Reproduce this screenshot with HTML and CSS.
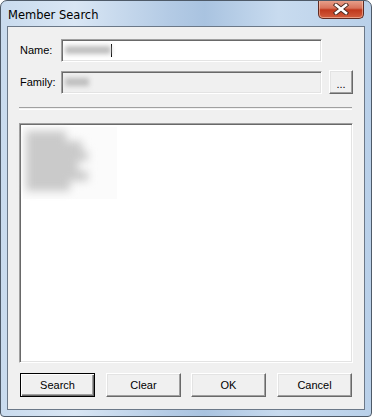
FILE: index.html
```html
<!DOCTYPE html>
<html lang="en">

<head>
  <meta charset="UTF-8">
  <title>Member Search</title>
  <link rel="stylesheet" href="styles.css">
</head>

<body>
  <div class="window">
    <!-- Title bar -->
    <div class="titlebar">
      <span class="title">Member Search</span>
      <button class="close" type="button" aria-label="Close">
        <svg width="18" height="12" viewBox="0 0 18 12">
          <path d="M4 2 L14 10 M14 2 L4 10" stroke="#4b2a22" stroke-width="4.4" stroke-linecap="square" fill="none"/>
          <path d="M4 2 L14 10 M14 2 L4 10" stroke="#fff" stroke-width="2.6" stroke-linecap="square" fill="none"/>
        </svg>
      </button>
    </div>

    <!-- Client area -->
    <div class="client">
      <div class="field-row">
        <label class="field-label" for="name">Name:</label>
        <div class="textbox" id="name"><span class="blur-text blur-name"></span><span class="caret"></span></div>
      </div>

      <div class="field-row">
        <label class="field-label" for="family">Family:</label>
        <div class="textbox disabled" id="family"><span class="blur-text blur-family"></span></div>
        <button class="btn btn-small" type="button">...</button>
      </div>

      <div class="separator"></div>

      <div class="listbox">
        <div class="list-blur">
          <div class="blur-group">
            <span class="blur-line w1"></span>
            <span class="blur-line w2"></span>
            <span class="blur-line w3"></span>
            <span class="blur-line w4"></span>
            <span class="blur-line w3"></span>
            <span class="blur-line w5"></span>
          </div>
        </div>
      </div>

      <div class="buttons">
        <button class="btn btn-default" type="button">Search</button>
        <button class="btn" type="button">Clear</button>
        <button class="btn" type="button">OK</button>
        <button class="btn" type="button">Cancel</button>
      </div>
    </div>
  </div>
</body>

</html>
```

FILE: styles.css
```css
/* Общие стили */
body {
  margin: 0;
  background-color: #fff;
  font-family: 'Liberation Sans', Arial, sans-serif;
  font-size: 11px;
  color: #000;
}

/* Окно */
.window {
  box-sizing: border-box;
  width: 372px;
  height: 417px;
  border: 1px solid #4e5a68;
  border-radius: 7px 7px 4px 4px;
  padding: 0 6px 6px;
  background: linear-gradient(90deg, #c9dbee 0%, #d9e6f4 20%, #b4cbe5 45%, #a9c3e0 55%, #c8dbef 75%, #b9d0e9 100%);
  display: flex;
  flex-direction: column;
  overflow: hidden;
}

/* Заголовок */
.titlebar {
  height: 28px;
  display: flex;
  align-items: flex-start;
  justify-content: space-between;
}

.title {
  margin-top: 7px;
  margin-left: 1px;
  font-family: 'DejaVu Sans', 'Noto Sans', sans-serif;
  font-size: 11.5px;
  color: #000;
}

.close {
  width: 46px;
  height: 19px;
  margin-top: -1px;
  margin-right: 1px;
  padding: 0;
  border: 1px solid #5f2b23;
  border-top: none;
  border-radius: 0 0 5px 5px;
  background: linear-gradient(180deg, #e9a590 0%, #d8735b 45%, #c0381c 55%, #d25d3e 100%);
  box-shadow: inset 0 0 0 1px rgba(255, 220, 200, 0.5);
  display: flex;
  align-items: center;
  justify-content: center;
}

/* Клиентская область */
.client {
  flex: 1;
  border: 1px solid #6b7888;
  background-color: #f0f0f0;
  padding: 11px 11px 12px 11px;
  display: flex;
  flex-direction: column;
}

.field-row {
  display: flex;
  align-items: center;
  height: 24px;
  margin-bottom: 8px;
}

.field-label {
  width: 41px;
  padding-left: 1px;
}

.textbox {
  box-sizing: border-box;
  width: 261px;
  height: 23px;
  background-color: #fff;
  border-top: 1px solid #a0a0a0;
  border-left: 1px solid #a0a0a0;
  border-bottom: 1px solid #fff;
  border-right: 1px solid #fff;
  box-shadow: inset 1px 1px 0 #696969, inset -1px -1px 0 #e3e3e3;
  display: flex;
  align-items: center;
  padding-left: 3px;
}

.textbox.disabled {
  background-color: #f0f0f0;
}

.caret {
  width: 1px;
  height: 13px;
  background-color: #000;
}

.blur-text {
  height: 8px;
  background-color: #bdbdbd;
  filter: blur(2.5px);
}

.blur-name {
  width: 46px;
}

.blur-family {
  width: 24px;
}

/* Кнопки */
.btn {
  box-sizing: border-box;
  width: 75px;
  height: 24px;
  padding: 0;
  font-family: 'Liberation Sans', Arial, sans-serif;
  font-size: 11px;
  color: #000;
  background-color: #f0f0f0;
  border-top: 1px solid #fff;
  border-left: 1px solid #fff;
  border-right: 1px solid #696969;
  border-bottom: 1px solid #696969;
  box-shadow: inset -1px -1px 0 #a0a0a0, inset 1px 1px 0 #e3e3e3;
}

.btn-small {
  width: 24px;
  margin-left: 7px;
  padding-top: 4px;
}

.btn-default {
  border: 1px solid #000;
  box-shadow: inset 1px 1px 0 #fff, inset -1px -1px 0 #696969, inset -2px -2px 0 #a0a0a0;
}

/* Разделитель */
.separator {
  width: 333px;
  height: 1px;
  border-top: 1px solid #a0a0a0;
  border-bottom: 1px solid #fff;
  margin: 5px 0 13px;
}

/* Список */
.listbox {
  box-sizing: border-box;
  width: 334px;
  height: 240px;
  background-color: #fff;
  border-top: 1px solid #a0a0a0;
  border-left: 1px solid #a0a0a0;
  border-bottom: 1px solid #fff;
  border-right: 1px solid #fff;
  box-shadow: inset 1px 1px 0 #696969, inset -1px -1px 0 #e3e3e3;
  padding: 3px 0 0 3px;
}

.list-blur {
  width: 94px;
  height: 72px;
  background-color: #fbfbfb;
  padding: 4px 0 0 3px;
  box-sizing: border-box;
}

.blur-group {
  display: flex;
  flex-direction: column;
  filter: blur(4px);
}

.blur-line {
  height: 10px;
  background-color: #cacaca;
}

.w1 { width: 40px; }
.w2 { width: 56px; }
.w3 { width: 62px; }
.w4 { width: 52px; }
.w5 { width: 44px; }

.buttons {
  display: flex;
  margin-top: 10px;
  padding-left: 1px;
}

.buttons .btn + .btn {
  margin-left: 11px;
}

.buttons .btn:nth-child(3) {
  margin-left: 10px;
}
```
